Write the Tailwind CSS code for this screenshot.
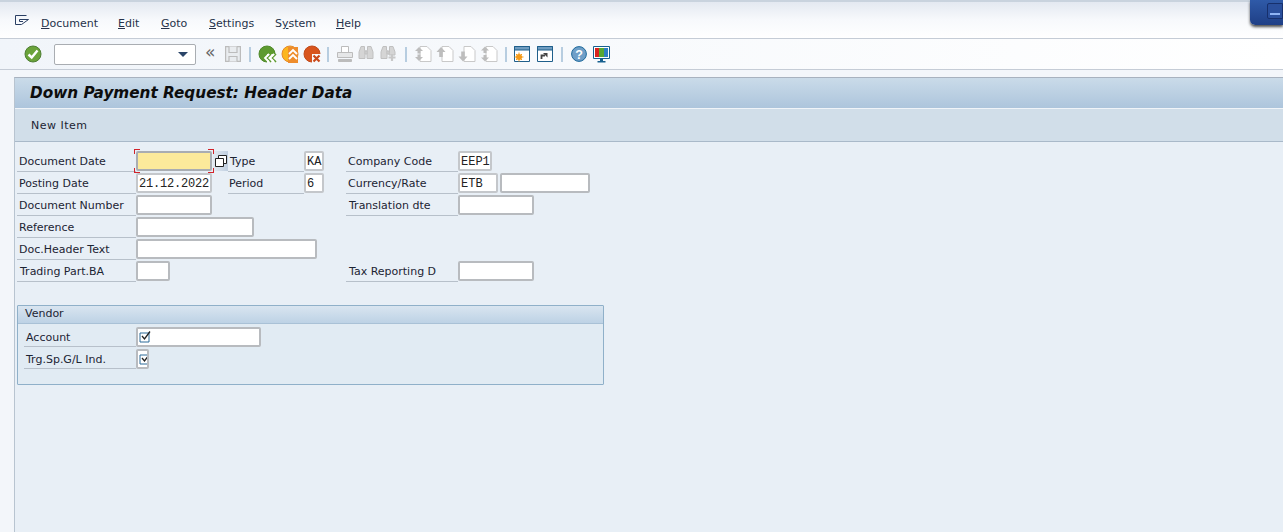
<!DOCTYPE html>
<html><head><meta charset="utf-8"><script src="https://cdn.jsdelivr.net/npm/@tailwindcss/browser@4"></script></head>
<body class="m-0 overflow-hidden">
<div class="relative w-[1283px] h-[532px] overflow-hidden flex flex-col bg-[#f3f6fa] font-['DejaVu_Sans',sans-serif] text-[11px] text-[#1c2433]">
  <!-- window button -->
  <div class="absolute right-0 top-0 w-[33px] h-[25px] bg-gradient-to-b from-[#2f5aa8] to-[#1f3f86] rounded-bl-[5px] shadow-[0_2px_3px_rgba(0,0,0,.7)] z-10">
    <div class="absolute left-[17px] top-[3px] w-[16px] h-[16px] border border-[#17306c] rounded-l-[2px] bg-[#2a4f9c]"><div class="mt-[9px] ml-[2px] w-[10px] h-[2px] bg-[#8fb4f4]"></div></div>
  </div>
  <!-- menu bar -->
  <div class="h-[39px] shrink-0 border-t-2 border-t-[#c9d3de] border-b border-b-[#c5ccd6] bg-gradient-to-b from-[#e4e9f1] via-[#f7f9fc] to-white flex items-center pl-[14px] pt-[9px] text-[#26324a]">
    <svg class="w-[16px] h-[13px] mb-[8px]" viewBox="0 0 16 13" fill="none" stroke="#2a3f63" stroke-width="1"><path d="M1.5 1.5H12.5M1.5 1.5V10.5H7.5M7.5 10.5L14.5 5.5H5.5V7.5H9"/></svg>
    <span class="ml-[11px] w-[77px]"><u>D</u>ocument</span>
    <span class="w-[43px]"><u>E</u>dit</span>
    <span class="w-[48px]"><u>G</u>oto</span>
    <span class="w-[66px]"><u>S</u>ettings</span>
    <span class="w-[61px]">S<u>y</u>stem</span>
    <span><u>H</u>elp</span>
  </div>
  <!-- toolbar -->
  <div class="h-[31px] shrink-0 border-b border-b-[#c5ccd6] bg-gradient-to-r from-[#f1f5fa] to-white flex items-center pl-[23px]">
    <svg class="w-[20px] h-[20px]" viewBox="0 0 20 20"><circle cx="10" cy="10" r="8" fill="#6aa33a" stroke="#4f7f35"/><path d="M5.5 10.5L8.7 13.5L14.5 6.5" fill="none" stroke="#fff" stroke-width="2.4"/></svg>
    <div class="ml-[11px] relative w-[142px] h-[21px] bg-white border border-[#a9adb2] rounded-[2px]">
      <div class="absolute right-[7px] top-[7px] w-0 h-0 border-x-[5px] border-x-transparent border-t-[5px] border-t-[#2a4468]"></div>
    </div>
    <span class="ml-[9px] w-[12px] text-[17px] leading-none text-[#666] mb-[3px]">«</span>
    <svg class="ml-[8px] w-[16px] h-[16px]" viewBox="0 0 16 16" fill="#e9ecef" stroke="#bcbcbc" stroke-width="1.2"><path d="M.6.6H15.4V15.4H.6Z"/><path d="M4 .6V6.5H12V.6M4 15.4V10.5H12V15.4"/></svg>
    <div class="ml-[8px] w-[2px] h-[15px] bg-[#b7cde0]"></div>
    <svg class="ml-[7px] w-[19px] h-[18px]" viewBox="0 0 19 18"><circle cx="9" cy="9" r="8" fill="#5d9a2f" stroke="#4f8a2b"/><path d="M9 9H19V18H9Z" fill="#f6f8fa"/><path d="M13 9L9 13L13 17M18 9L14 13L18 17" fill="none" stroke="#5d9a2f" stroke-width="1.7"/><path d="M11 9L7 13L11 17M16 9L12 13L16 17" fill="none" stroke="#fff" stroke-width="1.8"/></svg>
    <svg class="ml-[4px] w-[19px] h-[18px]" viewBox="0 0 19 18"><circle cx="9" cy="9" r="8" fill="#fcb61e" stroke="#e4892d"/><path d="M7 2H17V18H7Z" fill="#ee8d2c"/><path d="M8 9L12 5L16 9M8 14L12 10L16 14" fill="none" stroke="#fff" stroke-width="1.9"/></svg>
    <svg class="ml-[3px] w-[19px] h-[18px]" viewBox="0 0 19 18"><circle cx="9" cy="9" r="8" fill="#d8541c" stroke="#c04a1a"/><path d="M9 9H18V18H9Z" fill="#f7f8fa"/><path d="M10.5 10.5L16.5 16.5M16.5 10.5L10.5 16.5" stroke="#c9491a" stroke-width="2.2"/></svg>
    <div class="ml-[5px] w-[2px] h-[15px] bg-[#b7cde0]"></div>
    <svg class="ml-[8px] w-[16px] h-[16px]" viewBox="0 0 16 16" fill="#e6e7e8" stroke="#bcbcbc"><path d="M4.5 .5H11.5V6.5H4.5Z" fill="#fff"/><path d="M.5 6.5H15.5V11.5H.5Z"/><path d="M1.5 13.5H14.5V15.5H1.5Z" fill="#bcbcbc"/></svg>
    <svg class="ml-[5px] w-[16px] h-[16px]" viewBox="0 0 16 16" fill="#d5d5d5" stroke="#c0c0c0"><path d="M3 .5H6.5V4H7V12.5H1V6Z"/><path d="M13 .5H9.5V4H9V12.5H15V6Z"/><path d="M7 5H9V8H7Z"/></svg>
    <svg class="ml-[6px] w-[16px] h-[16px]" viewBox="0 0 16 16" fill="#d5d5d5" stroke="#c0c0c0"><path d="M3 .5H6.5V4H7V12.5H1V6Z"/><path d="M13 .5H9.5V6H9V9H15V6Z"/><path d="M7 5H9V8H7Z"/><path d="M12 8V15M8.5 11.5H15.5" stroke="#c8c8c8" stroke-width="2.2"/></svg>
    <div class="ml-[9px] w-[2px] h-[15px] bg-[#b7cde0]"></div>
    <svg class="ml-[7px] w-[18px] h-[16px]" viewBox="0 0 18 16" fill="none" stroke="#c9c9c9"><path d="M6 .5H13L17 4.5V15.5H6Z" fill="#fff"/><path d="M5 1L9 5H6.5V7.5H3.5V5H1Z M5 15L9 11H6.5V8.5H3.5V11H1Z" fill="#bdbdbd" stroke="none"/></svg>
    <svg class="ml-[4px] w-[18px] h-[16px]" viewBox="0 0 18 16" fill="none" stroke="#c9c9c9"><path d="M6 .5H13L17 4.5V15.5H6Z" fill="#fff"/><path d="M5 1L9.5 6H6.8V11H3.2V6H.5Z" fill="#bdbdbd" stroke="none"/></svg>
    <svg class="ml-[4px] w-[18px] h-[16px]" viewBox="0 0 18 16" fill="none" stroke="#c9c9c9"><path d="M6 .5H13L17 4.5V15.5H6Z" fill="#fff"/><path d="M5 15.5L.5 10.5H3.2V5.5H6.8V10.5H9.5Z" fill="#bdbdbd" stroke="none"/></svg>
    <svg class="ml-[4px] w-[18px] h-[16px]" viewBox="0 0 18 16" fill="none" stroke="#c9c9c9"><path d="M6 .5H13L17 4.5V15.5H6Z" fill="#fff"/><path d="M5 .5L9 4.5H6.5V7H3.5V4.5H1Z M5 15.5L9 11.5H6.5V9H3.5V11.5H1Z" fill="#bdbdbd" stroke="none"/></svg>
    <div class="ml-[7px] w-[2px] h-[15px] bg-[#b7cde0]"></div>
    <svg class="ml-[7px] w-[16px] h-[16px]" viewBox="0 0 16 16" fill="none"><path d="M.5.5H15.5V15.5H.5Z" fill="#fff" stroke="#1f5f8b"/><path d="M.5.5H15.5V4H.5Z" fill="#6f9cc0" stroke="#1f5f8b"/><circle cx="5" cy="11" r="3" fill="#f59a18"/><path d="M5 6.5V15.5M.5 11H9.5M2 8L8 14M8 8L2 14" stroke="#f59a18"/></svg>
    <svg class="ml-[7px] w-[16px] h-[16px]" viewBox="0 0 16 16" fill="none"><path d="M.5.5H15.5V15.5H.5Z" fill="#fff" stroke="#1f5f8b"/><path d="M.5.5H15.5V4H.5Z" fill="#6f9cc0" stroke="#1f5f8b"/><path d="M4.5 13V9.5H8" stroke="#444" stroke-width="1.8"/><path d="M6 7H10.5V11.5Z" fill="#444"/></svg>
    <div class="ml-[8px] w-[2px] h-[15px] bg-[#b7cde0]"></div>
    <svg class="ml-[8px] w-[16px] h-[16px]" viewBox="0 0 16 16"><circle cx="8" cy="8" r="7.4" fill="#6f9fc8" stroke="#1f6a9c"/><text x="8" y="12.5" text-anchor="middle" font-family="Liberation Sans" font-weight="700" font-size="12.5" fill="#fff">?</text></svg>
    <svg class="ml-[6px] w-[17px] h-[17px]" viewBox="0 0 17 17"><path d="M.5.5H16.5V12.5H.5Z" fill="#fff" stroke="#17608f"/><path d="M2 2H6V11H2Z" fill="#d8241f"/><path d="M6 2H11V11H6Z" fill="#57a832"/><path d="M11 2H15V11H11Z" fill="#2e7fc3"/><path d="M7 13H10V15H7ZM4.5 15H12.5V16.5H4.5Z" fill="#17608f"/></svg>
  </div>
  <!-- body -->
  <div class="flex-1 min-h-0 pl-[14px] pt-[7px]">
    <div class="h-full border-t border-t-[#a8b2bf] border-l border-l-[#b8c4d0] bg-[#e8eff6] flex flex-col">
      <div class="h-[30px] shrink-0 bg-gradient-to-b from-[#cadbe9] to-[#adc5dc] flex items-center pl-[15px] font-bold italic text-[15.25px] text-[#0d0d0d] border-b border-b-[#f0f4f8] box-content">Down Payment Request: Header Data</div>
      <div class="h-[33px] shrink-0 bg-[#d1dee9] flex items-center pl-[16px] pt-[3px] tracking-[.5px] border-b border-b-[#a9b9c9] box-border">New Item</div>
      <div class="pt-[9px] pl-[2px]">
        <div class="flex h-[22px]">
          <span class="w-[119px] h-[21px] border-b border-[#b7c0ca] pl-[2px] leading-[22px]">Document Date</span>
          <div class="relative w-[76px] h-[20px] bg-[#fcea9b] border-2 border-[#a9adb2] rounded-[2px]">
            <span class="absolute -left-[4px] -top-[4px] w-[6px] h-[5px] border-l border-t border-[#d2232a]"></span>
            <span class="absolute -right-[4px] -top-[4px] w-[6px] h-[5px] border-r border-t border-[#d2232a]"></span>
            <span class="absolute -left-[4px] -bottom-[4px] w-[6px] h-[5px] border-l border-b border-[#d2232a]"></span>
            <span class="absolute -right-[4px] -bottom-[4px] w-[6px] h-[5px] border-r border-b border-[#d2232a]"></span>
          </div>
          <div class="ml-[1px] w-[15px] h-[20px] bg-gradient-to-r from-[#e3eaf2] to-[#c0cfe0] flex items-center justify-center"><svg class="w-[12px] h-[12px]" viewBox="0 0 12 12" fill="#fff" stroke="#222"><path d="M3.5.5H11.5V8.5H3.5Z"/><path d="M.5 3.5H8.5V11.5H.5Z"/></svg></div>
          <span class="w-[76px] h-[21px] border-b border-[#b7c0ca] pl-[2px] leading-[22px]">Type</span>
          <div class="w-[20px] h-[20px] bg-white border-2 border-[#c4c7cb] rounded-[2px] font-['Liberation_Mono',monospace] leading-[18px] pl-[1px] text-[12px] text-[#222]">KA</div>
          <span class="ml-[22px] w-[112px] h-[21px] border-b border-[#b7c0ca] pl-[2px] leading-[22px]">Company Code</span>
          <div class="w-[34px] h-[20px] bg-white border-2 border-[#c4c7cb] rounded-[2px] font-['Liberation_Mono',monospace] leading-[18px] pl-[1px] text-[12px] text-[#222]">EEP1</div>
        </div>
        <div class="flex h-[22px]">
          <span class="w-[119px] h-[21px] border-b border-[#b7c0ca] pl-[2px] leading-[22px]">Posting Date</span>
          <div class="w-[76px] h-[20px] bg-white border-2 border-[#c4c7cb] rounded-[2px] font-['Liberation_Mono',monospace] leading-[18px] pl-[1px] text-[12px] text-[#222] tracking-[-.2px]">21.12.2022</div>
          <span class="ml-[16px] w-[76px] h-[21px] border-b border-[#b7c0ca] pl-[1px] leading-[22px]">Period</span>
          <div class="w-[20px] h-[20px] bg-white border-2 border-[#c4c7cb] rounded-[2px] font-['Liberation_Mono',monospace] leading-[18px] pl-[1px] text-[12px] text-[#222]">6</div>
          <span class="ml-[22px] w-[112px] h-[21px] border-b border-[#b7c0ca] pl-[2px] leading-[22px]">Currency/Rate</span>
          <div class="w-[40px] h-[20px] bg-white border-2 border-[#c4c7cb] rounded-[2px] font-['Liberation_Mono',monospace] leading-[18px] pl-[1px] text-[12px] text-[#222]">ETB</div>
          <div class="ml-[2px] w-[90px] h-[20px] bg-white border-2 border-[#b8bbbf] rounded-[2px]"></div>
        </div>
        <div class="flex h-[22px]">
          <span class="w-[119px] h-[21px] border-b border-[#b7c0ca] pl-[2px] leading-[22px]">Document Number</span>
          <div class="w-[76px] h-[20px] bg-white border-2 border-[#b8bbbf] rounded-[2px]"></div>
          <span class="ml-[134px] w-[112px] h-[21px] border-b border-[#b7c0ca] pl-[3px] leading-[22px]">Translation dte</span>
          <div class="w-[76px] h-[20px] bg-white border-2 border-[#b8bbbf] rounded-[2px]"></div>
        </div>
        <div class="flex h-[22px]">
          <span class="w-[119px] h-[21px] border-b border-[#b7c0ca] pl-[2px] leading-[22px]">Reference</span>
          <div class="w-[118px] h-[20px] bg-white border-2 border-[#b8bbbf] rounded-[2px]"></div>
        </div>
        <div class="flex h-[22px]">
          <span class="w-[119px] h-[21px] border-b border-[#b7c0ca] pl-[2px] leading-[22px]">Doc.Header Text</span>
          <div class="w-[181px] h-[20px] bg-white border-2 border-[#b8bbbf] rounded-[2px]"></div>
        </div>
        <div class="flex h-[22px]">
          <span class="w-[119px] h-[21px] border-b border-[#b7c0ca] pl-[3px] leading-[22px]">Trading Part.BA</span>
          <div class="w-[34px] h-[20px] bg-white border-2 border-[#b8bbbf] rounded-[2px]"></div>
          <span class="ml-[176px] w-[112px] h-[21px] border-b border-[#b7c0ca] pl-[3px] leading-[22px]">Tax Reporting D</span>
          <div class="w-[76px] h-[20px] bg-white border-2 border-[#b8bbbf] rounded-[2px]"></div>
        </div>
        <div class="mt-[22px] w-[587px] h-[80px] border border-[#8fb0c9] bg-[#e1ebf3] rounded-[1px]">
          <div class="h-[17px] bg-gradient-to-b from-[#d9e5f0] to-[#bdd2e5] border-b border-[#a9c1d6] pl-[7px] leading-[15px] box-content">Vendor</div>
          <div class="pt-[3px] pl-[6px]">
            <div class="flex h-[22px]">
              <span class="w-[112px] h-[20px] border-b border-[#b7c0ca] pl-[2px] leading-[22px]">Account</span>
              <div class="w-[125px] h-[20px] bg-white border-2 border-[#b8bbbf] rounded-[2px] pl-[1px] pt-[1px]">
                <svg class="w-[13px] h-[13px]" viewBox="0 0 13 13" fill="none"><path d="M1 3H10V12H1Z" stroke="#2a6a99"/><path d="M3 6L5.5 9L11 1.5" stroke="#222" stroke-width="1.3"/></svg>
              </div>
            </div>
            <div class="flex h-[22px]">
              <span class="w-[112px] h-[20px] border-b border-[#b7c0ca] pl-[2px] leading-[22px]">Trg.Sp.G/L Ind.</span>
              <div class="w-[13px] h-[20px] bg-white border-2 border-[#b8bbbf] rounded-[2px] pl-[1px] pt-[1px] overflow-hidden">
                <svg class="w-[13px] h-[13px] max-w-none" viewBox="0 0 13 13" fill="none"><path d="M1 3H10V12H1Z" stroke="#2a6a99"/><path d="M3 6L5.5 9L11 1.5" stroke="#222" stroke-width="1.3"/></svg>
              </div>
            </div>
          </div>
        </div>
      </div>
    </div>
  </div>
</div>
</body></html>
